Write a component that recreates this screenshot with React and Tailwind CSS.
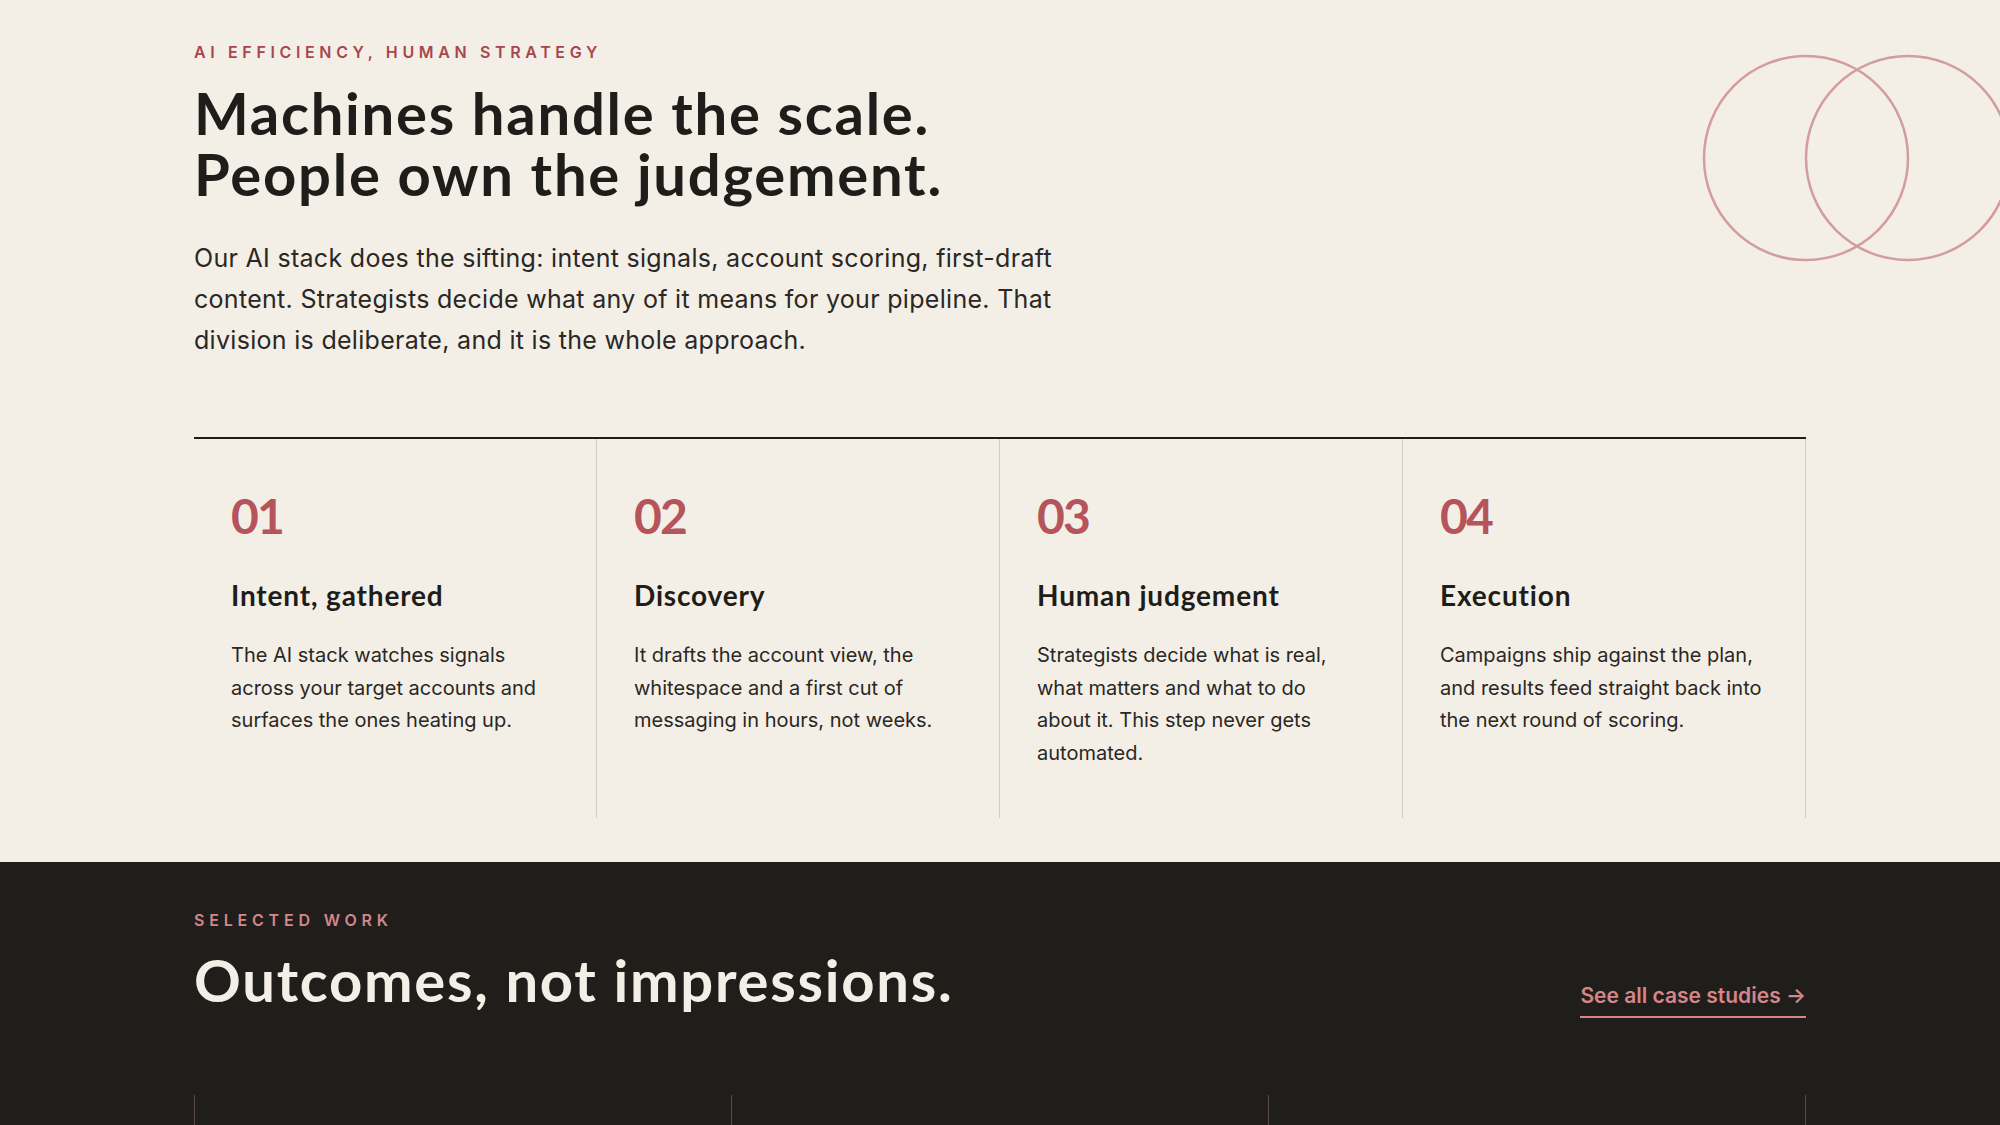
import React from "react";

const steps = [
  {
    n: "01",
    title: "Intent, gathered",
    body: "The AI stack watches signals across your target accounts and surfaces the ones heating up.",
  },
  {
    n: "02",
    title: "Discovery",
    body: "It drafts the account view, the whitespace and a first cut of messaging in hours, not weeks.",
  },
  {
    n: "03",
    title: "Human judgement",
    body: "Strategists decide what is real, what matters and what to do about it. This step never gets automated.",
  },
  {
    n: "04",
    title: "Execution",
    body: "Campaigns ship against the plan, and results feed straight back into the next round of scoring.",
  },
];

const head = { fontFamily: "Lato, 'Noto Sans', sans-serif" };
const body = { fontFamily: "Inter, 'Noto Sans', sans-serif" };

export default function App() {
  return (
    <div className="relative w-[2000px] h-[1125px] overflow-hidden bg-[#f3efe6]">
      <svg
        className="absolute left-[1700px] top-[52px]"
        width="300"
        height="212"
        viewBox="0 0 300 212"
        fill="none"
      >
        <circle cx="106" cy="106" r="102" stroke="#d39c9d" strokeWidth="2.5" />
        <circle cx="208" cy="106" r="102" stroke="#d39c9d" strokeWidth="2.5" />
      </svg>

      <section className="bg-[#f3efe6] pt-[40px] pb-[44px]">
        <div className="w-[1612px] mx-auto">
          <p
            className="text-[16px] leading-[24px] font-semibold tracking-[0.29em] text-[#a8464d] uppercase"
            style={body}
          >
            AI efficiency, human strategy
          </p>
          <h1
            className="mt-[18px] text-[58px] leading-[61px] font-bold text-[#1f1d1a] tracking-[0.03em]"
            style={head}
          >
            Machines handle the scale.
            <br />
            People own the judgement.
          </h1>
          <p
            className="mt-[34px] w-[880px] text-[25px] leading-[41px] text-[#2a2724] tracking-[0.012em]"
            style={body}
          >
            Our AI stack does the sifting: intent signals, account scoring, first-draft content. Strategists decide
            what any of it means for your pipeline. That division is deliberate, and it is the whole approach.
          </p>

          <div className="mt-[76px] border-t-2 border-[#1f1d1a] grid grid-cols-4">
            {steps.map((s) => (
              <div key={s.n} className="h-[379px] border-r border-[#d3ccc0] pl-[37px] pr-[41px] pt-[53px]">
                <div
                  className="text-[48px] leading-[48px] font-bold text-[#b5545a] tracking-[-0.04em]"
                  style={head}
                >
                  {s.n}
                </div>
                <h3
                  className="mt-[37px] text-[28px] leading-[36px] font-bold text-[#1f1d1a] tracking-[0.03em]"
                  style={head}
                >
                  {s.title}
                </h3>
                <p className="mt-[26px] text-[20px] leading-[32.5px] text-[#2a2724]" style={body}>
                  {s.body}
                </p>
              </div>
            ))}
          </div>
        </div>
      </section>

      <section className="bg-[#201e1b] pt-[46px] h-[400px]">
        <div className="w-[1612px] mx-auto">
          <p
            className="text-[16px] leading-[24px] font-semibold tracking-[0.3em] text-[#d4868b] uppercase"
            style={body}
          >
            Selected work
          </p>
          <div className="mt-[18px] flex items-end justify-between">
            <h2
              className="text-[58px] leading-[60px] font-bold text-[#f3efe6] tracking-[0.03em]"
              style={head}
            >
              Outcomes, not impressions.
            </h2>
            <a
              href="#"
              className="mb-[-8px] pb-[6px] border-b-2 border-[#d4868b] text-[21px] leading-[28px] font-semibold text-[#d4868b]"
              style={body}
            >
              See all case studies →
            </a>
          </div>
          <div className="mt-[85px] grid grid-cols-3 border-r border-[#5e4545]">
            <div className="h-[200px] border-l border-[#5e4545]" />
            <div className="h-[200px] border-l border-[#5e4545]" />
            <div className="h-[200px] border-l border-[#5e4545]" />
          </div>
        </div>
      </section>
    </div>
  );
}
